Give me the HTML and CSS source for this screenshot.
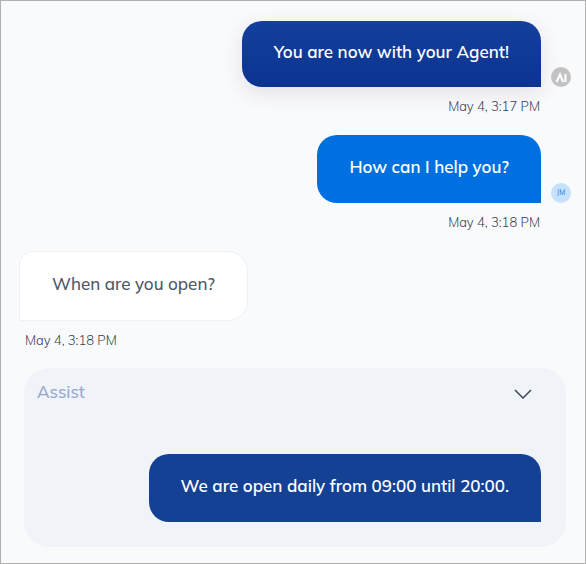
FILE: index.html
```html
<!DOCTYPE html>
<html lang="en">
<head>
<meta charset="utf-8">
<meta name="viewport" content="width=device-width, initial-scale=1">
<title>Chat</title>
<link rel="stylesheet" href="styles.css">
</head>
<body>
<main class="chat">
  <article class="message message-out">
    <p class="bubble bubble-system">You are now with your Agent!</p>
    <span class="avatar avatar-ai">
      <svg viewBox="0 0 20 20" role="img" aria-label="AI"><path d="M5.500 15 9 7.500 12.200 15M14.500 7V15"/></svg>
    </span>
    <time class="stamp">May 4, 3:17 PM</time>
  </article>
  <article class="message message-out">
    <p class="bubble bubble-agent">How can I help you?</p>
    <span class="avatar avatar-agent">JM</span>
    <time class="stamp">May 4, 3:18 PM</time>
  </article>
  <article class="message message-in">
    <p class="bubble bubble-visitor">When are you open?</p>
    <time class="stamp">May 4, 3:18 PM</time>
  </article>
  <section class="assist">
    <header class="assist-header">
      <h2 class="assist-title">Assist</h2>
      <button class="toggle" type="button" aria-label="Collapse suggestions">
        <svg viewBox="0 0 18 10" aria-hidden="true"><path d="M1 1 9 9 17 1"/></svg>
      </button>
    </header>
    <button class="bubble bubble-suggestion" type="button">We are open daily from 09:00 until 20:00.</button>
  </section>
</main>
</body>
</html>
```
FILE: styles.css
```css
* {
  box-sizing: border-box;
}

body {
  margin: 0;
  font-family: Mulish, Muli, Lato, "Liberation Sans", sans-serif;
  color: #364254;
}

.chat {
  min-height: 100vh;
  padding: 20px 14px 16px 18px;
  border: 1px solid #b0b0b0;
  background: #f9fafc;
}

.message {
  display: grid;
  margin-bottom: 20px;
}

.message-out {
  grid-template-columns: 1fr 20px;
  column-gap: 10px;
  justify-items: end;
  align-items: end;
}

.message-in {
  justify-items: start;
  margin-bottom: 19px;
}

.bubble {
  margin: 0;
  padding: 20px 32px 24px;
  border: 0;
  border-radius: 20px 20px 0 20px;
  font-family: inherit;
  font-size: 17px;
  font-weight: 600;
  line-height: 24px;
  color: #fff;
}

.bubble-system {
  padding: 19px 32px 23px;
  background: linear-gradient(#153f9c, #0b3491);
  box-shadow: 0 6px 20px rgba(70, 40, 80, 0.12);
}

.bubble-agent {
  background: #0070e0;
}

.bubble-visitor {
  border: 1px solid #edf1f5;
  border-radius: 14px 20px 20px 0;
  background: #fff;
  font-weight: 500;
  color: #4b5768;
}

.bubble-suggestion {
  align-self: flex-end;
  background: #144194;
  cursor: pointer;
}

.stamp {
  grid-column: 1;
  margin: 10px 1px 0 6px;
  font-size: 13px;
  font-weight: 300;
  line-height: 18px;
}

.avatar {
  display: grid;
  place-items: center;
  width: 20px;
  height: 20px;
  border-radius: 50%;
  font-size: 7px;
  font-weight: 600;
  line-height: 20px;
}

.avatar-ai {
  background: #c2c2c2;
}

.avatar-ai svg {
  width: 20px;
  height: 20px;
  fill: none;
  stroke: #fff;
  stroke-width: 2;
}

.avatar-agent {
  background: #c5e1fd;
  color: #4993d9;
}

.assist {
  display: flex;
  flex-direction: column;
  gap: 50px;
  margin: 0 5px;
  padding: 12px 25px 25px 13px;
  border-radius: 25px;
  background: #f0f3f8;
}

.assist-header {
  display: flex;
  align-items: center;
  justify-content: space-between;
}

.assist-title {
  margin: 0;
  font-size: 17px;
  font-weight: 500;
  line-height: 24px;
  color: #98a8cf;
}

.toggle {
  display: grid;
  place-items: center;
  width: 36px;
  height: 24px;
  padding: 4px 0 0;
  border: 0;
  background: none;
  cursor: pointer;
}

.toggle svg {
  width: 18px;
  height: 10px;
  fill: none;
  stroke: #3c4858;
  stroke-width: 1.5;
}
```
